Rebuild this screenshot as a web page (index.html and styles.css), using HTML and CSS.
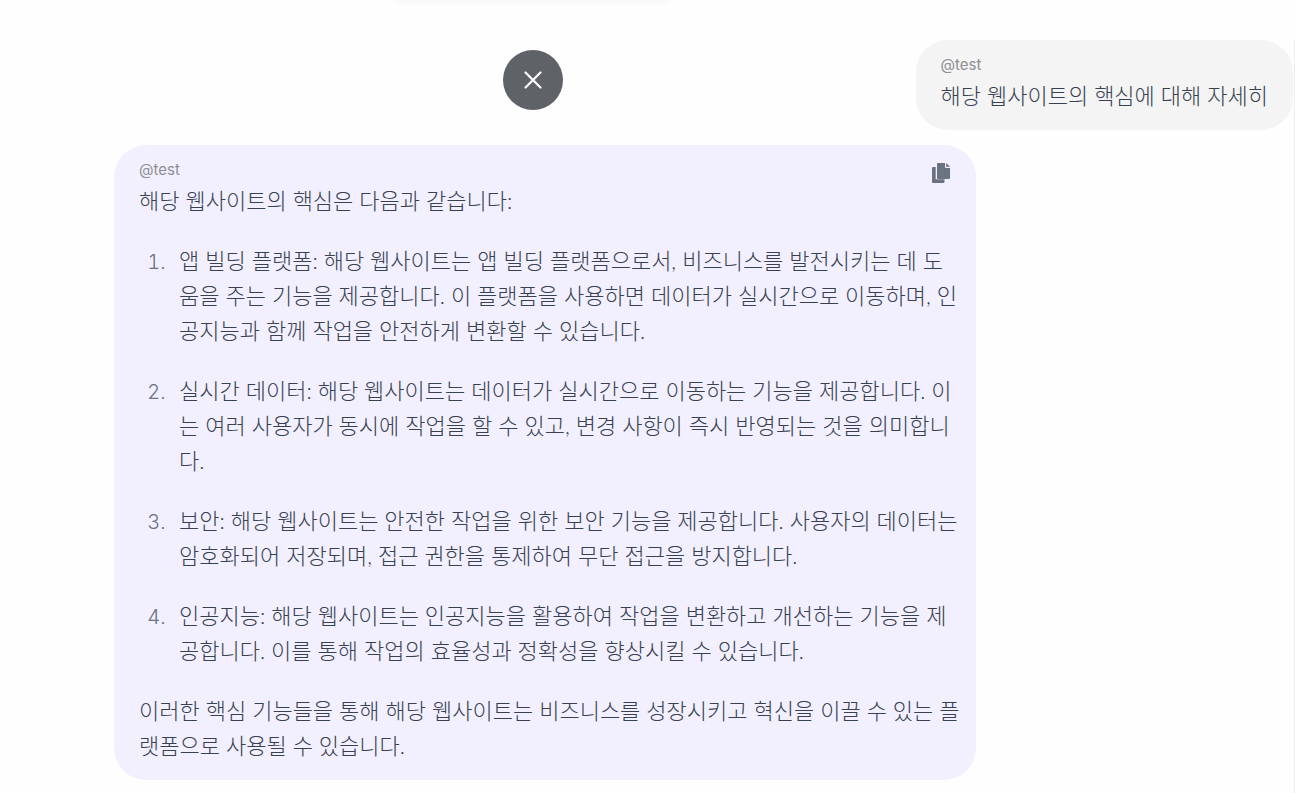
FILE: index.html
```html
<!DOCTYPE html>
<html lang="ko">
<head>
<meta charset="utf-8">
<meta name="viewport" content="width=device-width, initial-scale=1">
<title>Chat</title>
<link rel="stylesheet" href="styles.css">
</head>
<body>
<div class="top-panel"></div>
<button class="close" type="button" aria-label="닫기">
  <svg width="18" height="18" viewBox="0 0 18 18" fill="none" stroke="#fff" stroke-width="2.200" stroke-linecap="round" aria-hidden="true"><path d="M1.500 1.500l15 15M16.500 1.500l-15 15"/></svg>
</button>
<main class="chat">
  <article class="bubble question">
    <div class="author">@test</div>
    <p>해당 웹사이트의 핵심에 대해 자세히</p>
  </article>
  <article class="bubble answer">
    <button class="copy" type="button" aria-label="복사">
      <svg width="18" height="20" viewBox="0 0 18 20" fill="#6b7280" aria-hidden="true"><path d="M1 4h2.700v12.300H12.500V19q0 1-1 1H1q-1 0-1-1V5q0-1 1-1z"/><path d="M6 0h7v4q0 1 1 1h4v10q0 1-1 1H6q-1 0-1-1V1q0-1 1-1z"/><path d="M14.200 0L18 3.800H14.200z"/></svg>
    </button>
    <div class="author">@test</div>
    <p>해당 웹사이트의 핵심은 다음과 같습니다:</p>
    <ol>
      <li>앱 빌딩 플랫폼: 해당 웹사이트는 앱 빌딩 플랫폼으로서, 비즈니스를 발전시키는 데 도움을 주는 기능을 제공합니다. 이 플랫폼을 사용하면 데이터가 실시간으로 이동하며, 인공지능과 함께 작업을 안전하게 변환할 수 있습니다.</li>
      <li>실시간 데이터: 해당 웹사이트는 데이터가 실시간으로 이동하는 기능을 제공합니다. 이는 여러 사용자가 동시에 작업을 할 수 있고, 변경 사항이 즉시 반영되는 것을 의미합니다.</li>
      <li>보안: 해당 웹사이트는 안전한 작업을 위한 보안 기능을 제공합니다. 사용자의 데이터는 암호화되어 저장되며, 접근 권한을 통제하여 무단 접근을 방지합니다.</li>
      <li>인공지능: 해당 웹사이트는 인공지능을 활용하여 작업을 변환하고 개선하는 기능을 제공합니다. 이를 통해 작업의 효율성과 정확성을 향상시킬 수 있습니다.</li>
    </ol>
    <p>이러한 핵심 기능들을 통해 해당 웹사이트는 비즈니스를 성장시키고 혁신을 이끌 수 있는 플랫폼으로 사용될 수 있습니다.</p>
  </article>
</main>
</body>
</html>
```
FILE: styles.css
```css
* { box-sizing: border-box; }
body {
  margin: 0;
  padding-top: 40px;
  min-height: 100vh;
  display: flex;
  background: #fefefe;
  color: #374151;
  font-family: Lato, "Noto Sans CJK KR", sans-serif;
}
button { border: 0; padding: 0; cursor: pointer; }
.top-panel {
  position: absolute;
  top: -40px;
  left: 388px;
  width: 288px;
  height: 40px;
  border-radius: 12px;
  box-shadow: 0 0 8px rgba(0, 0, 0, .06);
}
.close {
  position: absolute;
  top: 50px;
  left: 503px;
  width: 60px;
  height: 60px;
  border-radius: 50%;
  background: #5f6368;
  display: grid;
  place-items: center;
}
.chat {
  flex: 1;
  display: flex;
  flex-direction: column;
  gap: 15px;
  padding-left: 114px;
  border-right: 1px solid #ececec;
}
.bubble {
  padding: 15px 25px 17px;
  border-radius: 32px;
  font-size: 22px;
  line-height: 35px;
  font-weight: 300;
}
.question {
  align-self: flex-end;
  margin-right: 1px;
  background: #f4f4f4;
}
.answer {
  position: relative;
  max-width: 862px;
  padding-right: 15px;
  background: #f2f0fe;
}
.author {
  margin-bottom: 3px;
  font-family: Inter, sans-serif;
  font-size: 15px;
  line-height: 20px;
  font-weight: 400;
  color: #8e8e93;
}
.copy {
  position: absolute;
  top: 18px;
  right: 26px;
  height: 20px;
  background: none;
}
.copy svg, .close svg { display: block; }
p, ol { margin: 0; }
.answer p + ol, .answer ol + p, li + li { margin-top: 25px; }
ol { padding-left: 32px; }
li { padding-left: 8px; }
li::marker {
  color: #6b7280;
  font-family: Inter, sans-serif;
  font-size: 20px;
}
```
